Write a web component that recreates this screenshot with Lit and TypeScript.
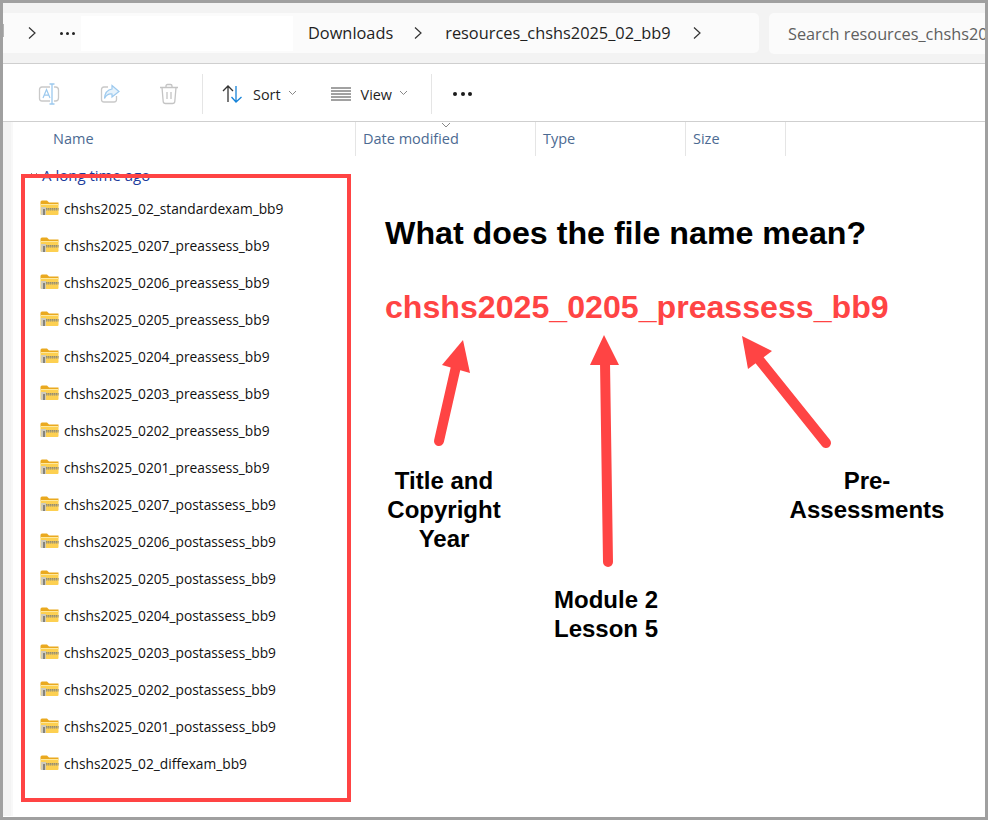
import { LitElement, html, css, svg } from "lit";
import { customElement } from "lit/decorators.js";

const FILES = [
  "chshs2025_02_standardexam_bb9",
  "chshs2025_0207_preassess_bb9",
  "chshs2025_0206_preassess_bb9",
  "chshs2025_0205_preassess_bb9",
  "chshs2025_0204_preassess_bb9",
  "chshs2025_0203_preassess_bb9",
  "chshs2025_0202_preassess_bb9",
  "chshs2025_0201_preassess_bb9",
  "chshs2025_0207_postassess_bb9",
  "chshs2025_0206_postassess_bb9",
  "chshs2025_0205_postassess_bb9",
  "chshs2025_0204_postassess_bb9",
  "chshs2025_0203_postassess_bb9",
  "chshs2025_0202_postassess_bb9",
  "chshs2025_0201_postassess_bb9",
  "chshs2025_02_diffexam_bb9",
];

const chevron = html`<svg class="crumb-chev" width="10" height="12" viewBox="0 0 10 12"><path d="M2 0.500 8 6 2 11.500" fill="none" stroke="#333" stroke-width="1.200"/></svg>`;
const caret = html`<svg class="caret" width="9" height="6" viewBox="0 0 9 6"><path d="M1 1 4.500 4.500 8 1" fill="none" stroke="#888" stroke-width="1"/></svg>`;

const zipFolder = html`<svg class="zip" width="19" height="16" viewBox="0 0 19 16">
  <path d="M0.500 2 Q0.500 0.500 2 0.500H7L9 2.500H18.500V5H0.500Z" fill="#eaa91f"/>
  <rect x="0.500" y="4" width="18" height="11" rx="1" fill="#fdd051"/>
  <rect x="0.500" y="4" width="18" height="1" fill="#fee9a0"/>
  <rect x="6" y="8" width="12.500" height="2.400" fill="#c4ad6c"/>
  <path d="M6 8.500H18.500M6 9.900H18.500" stroke="#7f7f72" stroke-width="0.700" stroke-dasharray="1 1"/>
  <rect x="1" y="7" width="5" height="8" fill="#cfcbbb"/>
  <rect x="3" y="9" width="2" height="6" fill="#85837a"/>
</svg>`;

@customElement("app-root")
export class AppRoot extends LitElement {
  static styles = css`
    :host {
      display: block;
      width: 988px;
      height: 820px;
      box-sizing: border-box;
      border: 3px solid #a0a0a0;
      background: #fff;
      font-family: "Open Sans", "Noto Sans", sans-serif;
      position: relative;
      overflow: hidden;
    }
    .addr {
      background: #f3f3f3;
      border-bottom: 1px solid #cfcfcf;
      display: flex;
      align-items: flex-start;
      padding-top: 10px;
      height: 50px;
      gap: 10px;
    }
    .crumbs {
      flex: 0 0 756px;
      height: 40px;
      background: #fbfbfb;
      border-radius: 0 5px 5px 0;
      display: flex;
      align-items: center;
      position: relative;
    }
    .grip {
      position: absolute;
      left: 0;
      top: 11px;
      width: 1px;
      height: 13px;
      background: #b5b5b5;
    }
    .nav {
      width: 78px;
      display: flex;
      align-items: center;
      flex: none;
    }
    .nav .crumb-chev { margin-left: 24px; }
    .dots3 {
      margin-left: 23px;
      display: flex;
      gap: 3px;
    }
    .dots3 i {
      width: 3px;
      height: 3px;
      background: #222;
      border-radius: 50%;
    }
    .blank {
      width: 212px;
      height: 35px;
      background: #fff;
      flex: none;
    }
    .crumb {
      font-size: 16.35px;
      color: #1f1f1f;
      white-space: nowrap;
    }
    .c1 { margin-left: 15px; }
    .crumbs .sep1 { margin: 0 22px 0 20px; display: flex; }
    .crumbs .sep2 { margin-left: 21px; display: flex; }
    .search {
      flex: 1;
      height: 41px;
      background: #fbfbfb;
      border-radius: 5px 0 0 5px;
      font-size: 16.3px;
      color: #5f5f5f;
      display: flex;
      align-items: center;
      padding-left: 19px;
      white-space: nowrap;
    }
    .toolbar {
      height: 58px;
      box-sizing: border-box;
      padding-top: 3px;
      border-bottom: 1px solid #cfcfcf;
      display: flex;
      align-items: center;
      background: #fff;
    }
    .tb-icon {
      width: 61px;
      display: flex;
      justify-content: center;
      flex: none;
    }
    .tb-first { margin-left: 15px; }
    .tb-trash { margin-left: -2px; margin-right: 3px; }
    .tb-div {
      width: 1px;
      height: 40px;
      background: #e5e5e5;
      flex: none;
    }
    .tb-btn {
      display: flex;
      align-items: center;
      font-size: 14.4px;
      color: #1f1f1f;
    }
    .tb-btn .caret { margin-left: 7px; margin-bottom: 2px; }
    .sort { margin: 0 34px 0 19px; }
    .sort span { margin-left: 10px; }
    .view { margin-right: 23px; }
    .view span { margin-left: 10px; }
    .more {
      margin-left: 21px;
      display: flex;
      gap: 3.5px;
    }
    .more i {
      width: 4px;
      height: 4px;
      background: #1a1a1a;
      border-radius: 50%;
    }
    .body {
      display: flex;
      height: 694px;
    }
    .gutter {
      width: 8px;
      background: #f3f3f3;
      border-right: 2px solid #f8f8f8;
      flex: none;
    }
    .main { flex: 1; position: relative; }
    .cols {
      display: grid;
      grid-template-columns: 343px 180px 150px 100px;
      height: 32px;
      position: relative;
      width: max-content;
    }
    .col {
      font-size: 14.5px;
      color: #4c6a92;
      line-height: 34px;
      padding-left: 7px;
      border-right: 1px solid #e5e5e5;
    }
    .col:first-child { padding-left: 40px; }
    .sort-mark { position: absolute; left: 428px; top: 0; }
    .group {
      height: 37px;
      display: flex;
      align-items: center;
      font-size: 15px;
      color: #1c3c9c;
      padding-left: 29px;
      position: relative;
      margin-top: 2px;
    }
    .group svg { position: absolute; left: 17px; top: 16px; }
    .list { margin-top: -3px; display: flex; flex-direction: column; }
    .row {
      height: 37px;
      display: flex;
      align-items: center;
      padding-left: 27px;
      font-size: 13.75px;
      color: #111;
      white-space: nowrap;
    }
    .row .zip { margin-right: 5px; margin-top: -1px; flex: none; }
    .redbox {
      position: absolute;
      left: 18px;
      top: 171px;
      width: 330px;
      height: 628px;
      box-sizing: border-box;
      border: 4px solid #ff4444;
    }
    .note {
      position: absolute;
      font-family: "Liberation Sans", Arial, sans-serif;
      font-weight: 700;
      color: #000;
    }
    .title { left: 382px; top: 211px; font-size: 32.2px; line-height: 38px; white-space: nowrap; }
    .code { left: 382px; top: 285px; font-size: 32.13px; line-height: 38px; color: #ff4444; white-space: nowrap; }
    .label { font-size: 24px; line-height: 29px; text-align: center; white-space: nowrap; transform: translateX(-50%); }
    .l1 { left: 441px; top: 463px; }
    .l2 { left: 603px; top: 582px; }
    .l3 { left: 864px; top: 463px; }
    .arrows { position: absolute; left: -3px; top: -3px; pointer-events: none; }
  `;

  render() {
    return html`
      <div class="addr">
        <div class="crumbs">
          <div class="grip"></div>
          <div class="nav">${chevron}<div class="dots3"><i></i><i></i><i></i></div></div>
          <div class="blank"></div>
          <span class="crumb c1">Downloads</span>
          <span class="sep1">${chevron}</span>
          <span class="crumb">resources_chshs2025_02_bb9</span>
          <span class="sep2">${chevron}</span>
        </div>
        <div class="search">Search resources_chshs20</div>
      </div>
      <div class="toolbar">
        <div class="tb-icon tb-first">
          <svg width="22" height="22" viewBox="0 0 22 22" fill="none">
            <path d="M12 4H4Q1.500 4 1.500 6.500V15.500Q1.500 18 4 18H12M16 4H17.500Q20.500 4 20.500 7V15Q20.500 18 17.500 18H16" stroke="#c9c9c9" stroke-width="1.300"/>
            <path d="M5 15 8.500 6.500 12 15M6.300 12.200H10.700" stroke="#9cc9ee" stroke-width="1.200"/>
            <path d="M14 1v20M11.500 1h5M11.500 21h5" stroke="#9cc9ee" stroke-width="1.300"/>
          </svg>
        </div>
        <div class="tb-icon">
          <svg width="20" height="20" viewBox="0 0 20 20" fill="none">
            <path d="M8 3H4Q1.500 3 1.500 5.500V15.500Q1.500 18 4 18H14Q16.500 18 16.500 15.500V12" stroke="#c9c9c9" stroke-width="1.300"/>
            <path d="M12 1.500 19 7.500 12 13V10Q7 9.500 4.500 14.500Q5 6 12 5Z" stroke="#9cc9ee" stroke-width="1.200" fill="#e6f2fb"/>
          </svg>
        </div>
        <div class="tb-icon tb-trash">
          <svg width="20" height="22" viewBox="0 0 20 22" fill="none" stroke="#c4c4c4" stroke-width="1.300">
            <path d="M1 4.500H19M7 4.500V3Q7 1.500 8.500 1.500H11.500Q13 1.500 13 3V4.500"/>
            <path d="M3 4.500 4.200 18.500Q4.400 20.500 6.500 20.500H13.500Q15.600 20.500 15.800 18.500L17 4.500"/>
            <path d="M8 9V16M12 9V16"/>
          </svg>
        </div>
        <div class="tb-div"></div>
        <div class="tb-btn sort">
          <svg width="21" height="20" viewBox="0 0 21 20" fill="none" stroke-width="1.300">
            <path d="M6 18V2M1 7 6 2 11 7" stroke="#333"/>
            <path d="M14 2V18M9.500 13 14 18 19.500 13" stroke="#1683d8"/>
          </svg>
          <span>Sort</span>${caret}
        </div>
        <div class="tb-btn view">
          <svg width="20" height="14" viewBox="0 0 20 14" fill="none" stroke="#444" stroke-width="1">
            <path d="M0 1H20M0 4H20M0 7H20M0 10H20M0 13H20"/>
          </svg>
          <span>View</span>${caret}
        </div>
        <div class="tb-div"></div>
        <div class="more"><i></i><i></i><i></i></div>
      </div>
      <div class="body">
        <div class="gutter"></div>
        <div class="main">
          <div class="cols">
            <div class="col">Name</div>
            <div class="col">Date modified</div>
            <div class="col">Type</div>
            <div class="col">Size</div>
            <svg class="sort-mark" width="10" height="6" viewBox="0 0 10 6"><path d="M1 1 5 5 9 1" fill="none" stroke="#888" stroke-width="1"/></svg>
          </div>
          <div class="group">
            <svg width="8" height="6" viewBox="0 0 8 6"><path d="M1 1 4 4 7 1" fill="none" stroke="#888" stroke-width="1"/></svg>
            A long time ago
          </div>
          <div class="list">
            ${FILES.map((f) => html`<div class="row">${zipFolder}<span>${f}</span></div>`)}
          </div>
        </div>
      </div>
      <div class="redbox"></div>
      <div class="note title">What does the file name mean?</div>
      <div class="note code">chshs2025_0205_preassess_bb9</div>
      <div class="note label l1">Title and<br />Copyright<br />Year</div>
      <div class="note label l2">Module 2<br />Lesson 5</div>
      <div class="note label l3">Pre-<br />Assessments</div>
      <svg class="arrows" width="988" height="820" viewBox="0 0 988 820">
        ${svg`
        <g stroke="#ff4444" stroke-width="10" stroke-linecap="round" fill="none">
          <path d="M439 441 457 362"/>
          <path d="M608 562 605 362"/>
          <path d="M826 443 757 357"/>
        </g>
        <g fill="#ff4444">
          <path d="M463 340 442 365 470 373Z"/>
          <path d="M604 335 590 365 619 365Z"/>
          <path d="M742 336 748 369 772 351Z"/>
        </g>`}
      </svg>
    `;
  }
}
